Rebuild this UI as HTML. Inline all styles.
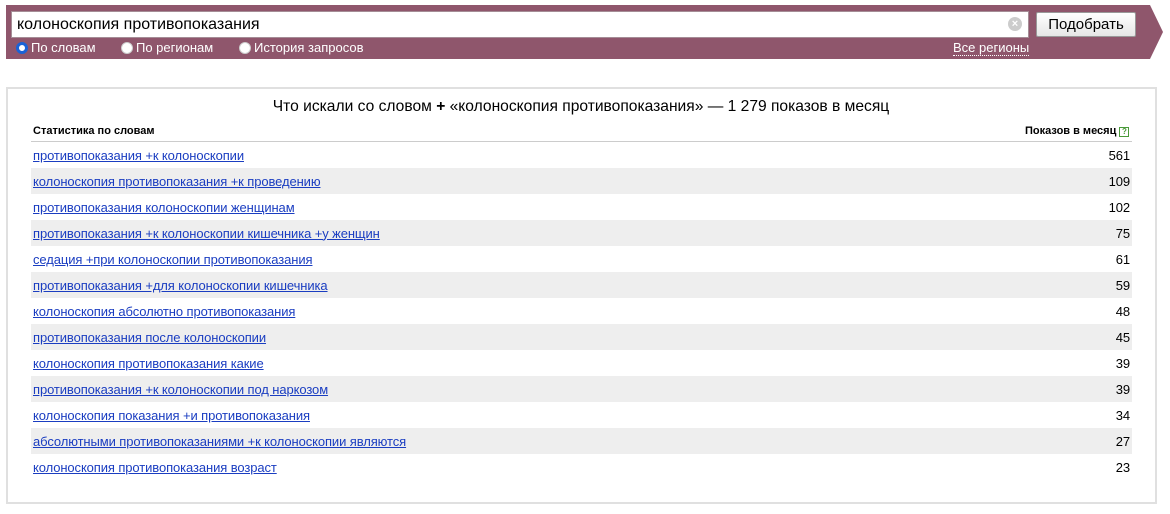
<!DOCTYPE html>
<html><head><meta charset="utf-8"><style>
*{margin:0;padding:0;box-sizing:border-box}
body{width:1170px;height:514px;background:#fff;font-family:Arial,"Liberation Sans",sans-serif;position:relative;overflow:hidden}
.ban{position:absolute;left:6px;top:5px;width:1144px;height:54px;background:#8f566c}
.tip{position:absolute;left:1150px;top:5px;width:0;height:0;border-top:27px solid transparent;border-bottom:27px solid transparent;border-left:13px solid #8f566c}
.inp{position:absolute;left:11px;top:11px;width:1018px;height:27px;background:#fff;border:1px solid #a58d96;font-size:16px;line-height:25px;padding-left:5px;color:#000}
.clr{position:absolute;left:1008px;top:17px;width:14px;height:14px;border-radius:50%;background:#ccc;color:#fff;font-size:11px;line-height:14px;text-align:center;font-weight:bold}
.btn{position:absolute;left:1036px;top:12px;width:100px;height:25px;border:1px solid #999;border-radius:2px;background:linear-gradient(#fff,#e6e6e6);font-size:15px;line-height:23px;text-align:center;color:#000}
.rad{position:absolute;top:40px;font-size:13px;color:#fff;line-height:16px}
.rad i{display:inline-block;width:12px;height:12px;border-radius:50%;background:#fff;vertical-align:-2px;margin-right:3px;border:1px solid #ccc}
.rad i.on{border:3px solid #1a62d6}
.all{position:absolute;left:953px;top:40px;font-size:13px;color:#fff;border-bottom:1px dotted #fff;line-height:15px}
.pan{position:absolute;left:6px;top:87px;width:1151px;height:417px;border:2px solid #e0e0e0}
.ttl{position:absolute;left:0;width:1162px;top:98px;text-align:center;font-size:15.6px;color:#000}
.hd{position:absolute;top:125px;font-size:11px;font-weight:bold;color:#000}
.ln{position:absolute;left:31px;top:141px;width:1101px;height:1px;background:#ccc}
table{position:absolute;left:31px;top:142px;width:1101px;border-collapse:collapse;font-size:13px;letter-spacing:-0.1px}
td{height:26px;padding:0 2px}
tr:nth-child(even){background:#eee}
td a{color:#1a3dc1;text-decoration:underline}
td.n{text-align:right;color:#000}
.q{display:inline-block;width:10px;height:10px;border:1px solid #4a9a3a;color:#4a9a3a;font-size:8px;line-height:8px;text-align:center;vertical-align:0}
</style></head><body>
<div class="ban"></div><div class="tip"></div>
<div class="inp">колоноскопия противопоказания</div>
<div class="clr">×</div>
<div class="btn">Подобрать</div>
<div class="rad" style="left:16px"><i class="on"></i>По словам</div>
<div class="rad" style="left:121px"><i></i>По регионам</div>
<div class="rad" style="left:239px"><i></i>История запросов</div>
<div class="all">Все регионы</div>
<div class="pan"></div>
<div class="ttl">Что искали со словом <b>+</b> «колоноскопия противопоказания» — 1 279 показов в месяц</div>
<div class="hd" style="left:33px">Статистика по словам</div>
<div class="hd" style="left:1025px">Показов в месяц <span class="q">?</span></div>
<div class="ln"></div>
<table>
<tr><td><a>противопоказания +к колоноскопии</a></td><td class="n">561</td></tr>
<tr><td><a>колоноскопия противопоказания +к проведению</a></td><td class="n">109</td></tr>
<tr><td><a>противопоказания колоноскопии женщинам</a></td><td class="n">102</td></tr>
<tr><td><a>противопоказания +к колоноскопии кишечника +у женщин</a></td><td class="n">75</td></tr>
<tr><td><a>седация +при колоноскопии противопоказания</a></td><td class="n">61</td></tr>
<tr><td><a>противопоказания +для колоноскопии кишечника</a></td><td class="n">59</td></tr>
<tr><td><a>колоноскопия абсолютно противопоказания</a></td><td class="n">48</td></tr>
<tr><td><a>противопоказания после колоноскопии</a></td><td class="n">45</td></tr>
<tr><td><a>колоноскопия противопоказания какие</a></td><td class="n">39</td></tr>
<tr><td><a>противопоказания +к колоноскопии под наркозом</a></td><td class="n">39</td></tr>
<tr><td><a>колоноскопия показания +и противопоказания</a></td><td class="n">34</td></tr>
<tr><td><a>абсолютными противопоказаниями +к колоноскопии являются</a></td><td class="n">27</td></tr>
<tr><td><a>колоноскопия противопоказания возраст</a></td><td class="n">23</td></tr>
</table>
</body></html>
